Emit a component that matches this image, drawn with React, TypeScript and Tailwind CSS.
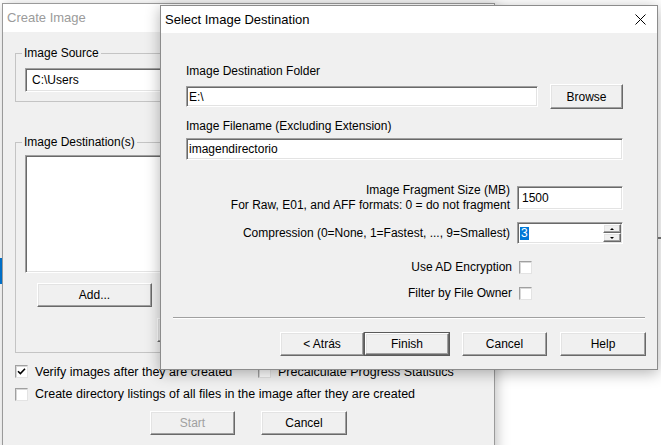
import React from 'react'

const sunken =
  'bg-white border border-t-[#a0a0a0] border-l-[#a0a0a0] border-r-white border-b-white shadow-[inset_1px_1px_0_#696969,inset_-1px_-1px_0_#e3e3e3]'

const raised =
  'bg-[#f0f0f0] border border-t-white border-l-white border-r-[#696969] border-b-[#696969] shadow-[inset_-1px_-1px_0_#a0a0a0,inset_1px_1px_0_#e3e3e3]'

const Button = ({ label, w, def, disabled }: { label: string; w: string; def?: boolean; disabled?: boolean }) => {
  if (def) {
    return (
      <div className={`${w} h-[24px] border border-[#5a5a5a] flex`}>
        <div className={`${raised} flex-1 flex items-center justify-center text-[12px] text-black`}>{label}</div>
      </div>
    )
  }
  return (
    <div
      className={`${raised} ${w} h-[24px] flex items-center justify-center text-[12px] ${disabled ? 'text-[#a0a0a0]' : 'text-black'}`}
    >
      {label}
    </div>
  )
}

const CheckBox = ({ checked }: { checked?: boolean }) => (
  <div className="w-[13px] h-[13px] shrink-0 bg-white border border-t-[#a0a0a0] border-l-[#a0a0a0] border-r-[#e3e3e3] border-b-[#e3e3e3] shadow-[inset_1px_1px_0_#d8d8d8] flex items-center justify-center">
    {checked && (
      <svg width="9" height="9" viewBox="0 0 9 9">
        <path d="M1 4.2 L3.4 6.6 L8 1.8" stroke="#000" strokeWidth="1.6" fill="none" />
      </svg>
    )}
  </div>
)

const CreateImage = () => {
  return (
    <div className="absolute left-[2px] top-[3px] w-[493px] h-[470px] border border-[#9a9a9a] bg-[#f0f0f0] shadow-[2px_2px_12px_rgba(0,0,0,0.25)] flex flex-col">
      <div className="h-[28px] bg-white flex items-center pl-[4px] text-[13px] text-[#9b9b9b]">Create Image</div>

      <div className="flex flex-col pl-[12px] text-[12px] text-black">
        <fieldset className="mt-[14px] w-[465px] border border-[#c4c4c4] pb-[9px]">
          <legend className="ml-[6px] px-[2px] leading-[14px]">Image Source</legend>
          <div className={`${sunken} mt-[8px] ml-[9px] w-[440px] h-[24px] flex items-center pl-[6px]`}>C:\Users</div>
        </fieldset>

        <fieldset className="mt-[33px] w-[465px] border border-[#c4c4c4] pb-[10px]">
          <legend className="ml-[6px] px-[2px] leading-[14px]">Image Destination(s)</legend>
          <div className={`${sunken} mt-[6px] ml-[9px] w-[440px] h-[118px]`} />
          <div className="mt-[10px] ml-[21px]">
            <Button label="Add..." w="w-[115px]" />
          </div>
          <div className="mt-[11px] ml-[141px]">
            <Button label="Remove" w="w-[115px]" />
          </div>
        </fieldset>

        <div className="mt-[11px] flex items-center h-[14px] text-[12.5px]">
          <div className="w-[243px] flex items-center gap-[7px]">
            <CheckBox checked />
            <span className="mt-[2px]">Verify images after they are created</span>
          </div>
          <div className="flex items-center gap-[7px]">
            <CheckBox />
            <span className="mt-[2px]">Precalculate Progress Statistics</span>
          </div>
        </div>

        <div className="mt-[9px] flex items-center h-[14px] gap-[7px] text-[12.5px]">
          <CheckBox />
          <span className="mt-[1px]">Create directory listings of all files in the image after they are created</span>
        </div>

        <div className="mt-[10px] ml-[135px] flex gap-[26px]">
          <Button label="Start" w="w-[85px]" disabled />
          <Button label="Cancel" w="w-[86px]" />
        </div>
      </div>
    </div>
  )
}

const SelectDestination = () => {
  return (
    <div className="absolute left-[160px] top-[5px] w-[498px] h-[365px] border border-[#8c8c8c] bg-[#f0f0f0] shadow-[0_3px_14px_rgba(0,0,0,0.3)] flex flex-col text-[12px] text-black">
      <div className="h-[27px] bg-white flex items-center justify-between pl-[4px] pr-[11px]">
        <span className="text-[13px]">Select Image Destination</span>
        <svg width="11" height="11" viewBox="0 0 11 11">
          <path d="M0.5 0.5 L10.5 10.5 M10.5 0.5 L0.5 10.5" stroke="#000" strokeWidth="1" />
        </svg>
      </div>

      <div className="flex flex-col pl-[25px] pr-[34px]">
        <div className="mt-[31px] leading-[14px]">Image Destination Folder</div>
        <div className="mt-[6px] h-[25px] flex items-center gap-[12px]">
          <div className={`${sunken} w-[352px] h-[21px] flex items-center pl-[2px]`}>E:\</div>
          <div className="h-[25px] flex">
            <Button label="Browse" w="w-[73px] !h-[25px]" />
          </div>
        </div>

        <div className="mt-[10px] leading-[14px]">Image Filename (Excluding Extension)</div>
        <div className={`${sunken} mt-[5px] h-[22px] flex items-center pl-[2px]`}>imagendirectorio</div>

        <div className="mt-[23px] grid grid-cols-[324px_106px] gap-x-[7px] items-center">
          <div className="text-right leading-[15px]">
            Image Fragment Size (MB)
            <br />
            For Raw, E01, and AFF formats: 0 = do not fragment
          </div>
          <div className={`${sunken} h-[24px] flex items-center pl-[4px]`}>1500</div>
        </div>

        <div className="mt-[9px] grid grid-cols-[324px_106px] gap-x-[7px] items-center">
          <div className="text-right">Compression (0=None, 1=Fastest, ..., 9=Smallest)</div>
          <div className={`${sunken} h-[22px] flex items-center pl-[2px] justify-between`}>
            <span className="bg-[#0078d7] text-white px-[1px] leading-[13px]">3</span>
            <div className="flex flex-col mr-[1px]">
              <div className={`${raised} w-[18px] h-[9px] flex items-center justify-center`}>
                <div className="w-0 h-0 border-l-[2px] border-r-[2px] border-b-[2px] border-l-transparent border-r-transparent border-b-black" />
              </div>
              <div className={`${raised} w-[18px] h-[9px] flex items-center justify-center`}>
                <div className="w-0 h-0 border-l-[2px] border-r-[2px] border-t-[2px] border-l-transparent border-r-transparent border-t-black" />
              </div>
            </div>
          </div>
        </div>

        <div className="mt-[14px] grid grid-cols-[326px_20px] gap-x-[7px] items-center h-[14px]">
          <div className="text-right">Use AD Encryption</div>
          <CheckBox />
        </div>

        <div className="mt-[12px] grid grid-cols-[326px_20px] gap-x-[7px] items-center h-[14px]">
          <div className="text-right">Filter by File Owner</div>
          <CheckBox />
        </div>
      </div>

      <div className="mt-[19px] mx-[12px] border-t border-t-[#a0a0a0] border-b border-b-white" />

      <div className="mt-[13px] pr-[11px] flex justify-end">
        <Button label="< Atrás" w="w-[84px]" />
        <Button label="Finish" w="w-[86px]" def />
        <div className="ml-[12px]">
          <Button label="Cancel" w="w-[85px]" />
        </div>
        <div className="ml-[13px]">
          <Button label="Help" w="w-[86px]" />
        </div>
      </div>
    </div>
  )
}

export default function App() {
  return (
    <div className="relative w-[661px] h-[445px] overflow-hidden bg-white font-['Liberation_Sans',Arial,sans-serif]">
      <div className="absolute left-0 top-[258px] w-[2px] h-[26px] bg-[#0078d7]" />
      <CreateImage />
      <div className="absolute left-[658px] top-[237px] w-[3px] h-[2px] bg-[#7a7a7a]" />
      <SelectDestination />
    </div>
  )
}
